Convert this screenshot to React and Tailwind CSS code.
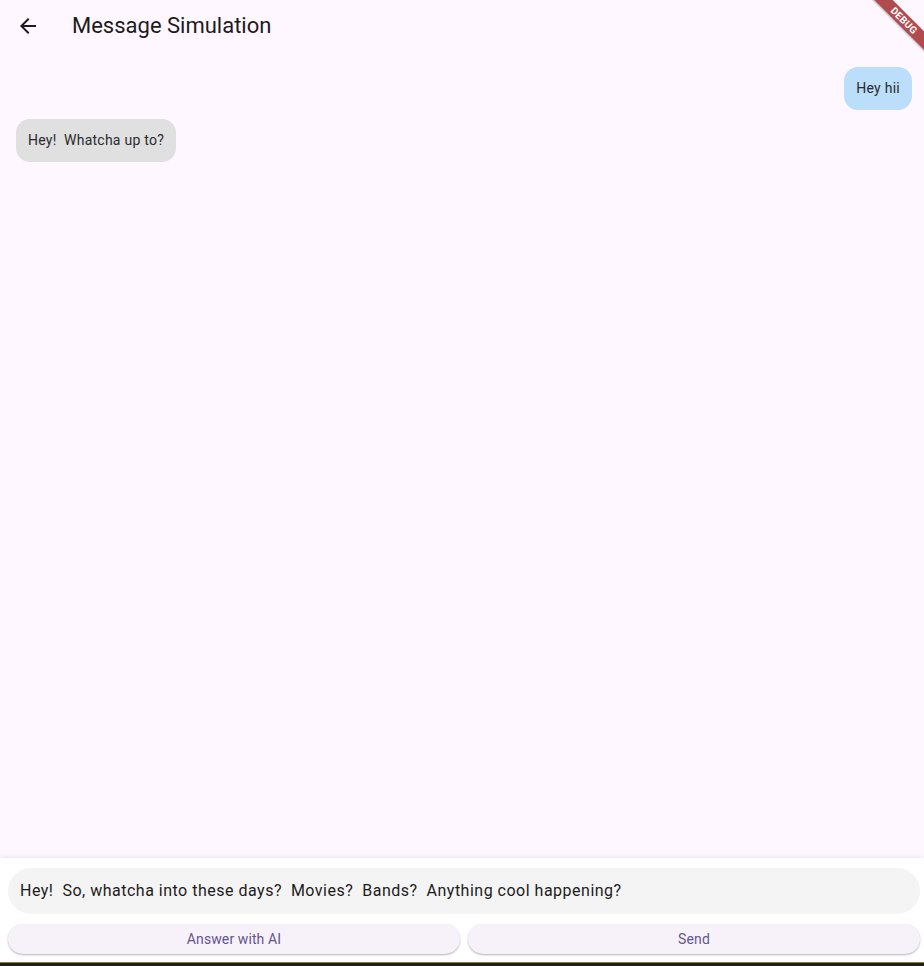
import React from "react";

export default function App() {
  return (
    <div
      className="relative w-[924px] h-[966px] overflow-hidden bg-[#fef7ff] flex flex-col"
      style={{ fontFamily: "Roboto, 'Noto Sans', sans-serif" }}
    >
      {/* App bar */}
      <div className="h-[52px] flex items-center shrink-0">
        <div className="w-[56px] flex items-center justify-center">
          <svg width="24" height="24" viewBox="0 0 24 24">
            <path d="M20 11H7.83l5.59-5.59L12 4l-8 8 8 8 1.41-1.41L7.83 13H20v-2z" fill="#1d1b20" />
          </svg>
        </div>
        <div className="ml-[16px] text-[22px] text-[#1d1b20] leading-none">Message Simulation</div>
      </div>

      {/* Messages */}
      <div className="flex-1 flex flex-col px-[12px] pt-[15px] gap-[9px]">
        <div className="flex justify-end">
          <div className="bg-[#bbdefb] rounded-[14px] h-[43px] px-[12px] flex items-center text-[14px] text-[#2a2a2e] tracking-[0.25px]">
            Hey hii
          </div>
        </div>
        <div className="flex justify-start pl-[4px]">
          <div className="bg-[#e0e0e0] rounded-[14px] h-[43px] px-[12px] flex items-center text-[14px] text-[#2a2a2e] tracking-[0.25px]">
            Hey!&nbsp; Whatcha up to?
          </div>
        </div>
      </div>

      {/* Bottom panel */}
      <div className="shrink-0 bg-white shadow-[0_-2px_4px_rgba(0,0,0,0.06)] pt-[10px] pb-[8px] pl-[8px] pr-[4px] flex flex-col gap-[10px] h-[104px]">
        <div className="h-[46px] bg-[#f4f4f4] rounded-[23px] flex items-center px-[12px] text-[16px] text-[#1d1b20] tracking-[0.5px]">
          Hey!&nbsp; So, whatcha into these days?&nbsp; Movies?&nbsp; Bands?&nbsp; Anything cool happening?
        </div>
        <div className="flex gap-[8px]">
          <button className="flex-1 h-[30px] rounded-full bg-[#f7f2fa] shadow-[0_1px_2px_rgba(0,0,0,0.3)] text-[14px] text-[#65558f] tracking-[0.1px]">
            Answer with AI
          </button>
          <button className="flex-1 h-[30px] rounded-full bg-[#f7f2fa] shadow-[0_1px_2px_rgba(0,0,0,0.3)] text-[14px] text-[#65558f] tracking-[0.1px]">
            Send
          </button>
        </div>
      </div>
      <div className="shrink-0 h-[4px] bg-[#1e1e1e] border-t border-[#8a7a2a]"></div>

      {/* Debug banner */}
      <div className="absolute top-0 right-0 w-[70px] h-[70px] overflow-hidden pointer-events-none">
        <div className="absolute left-[0px] top-[14px] w-[100px] h-[13px] bg-[#a8383b]/90 rotate-45 flex items-center justify-center text-[10px] font-bold text-white tracking-[0.2px] shadow-[0_1px_2px_rgba(0,0,0,0.3)]">
          DEBUG
        </div>
      </div>
    </div>
  );
}
